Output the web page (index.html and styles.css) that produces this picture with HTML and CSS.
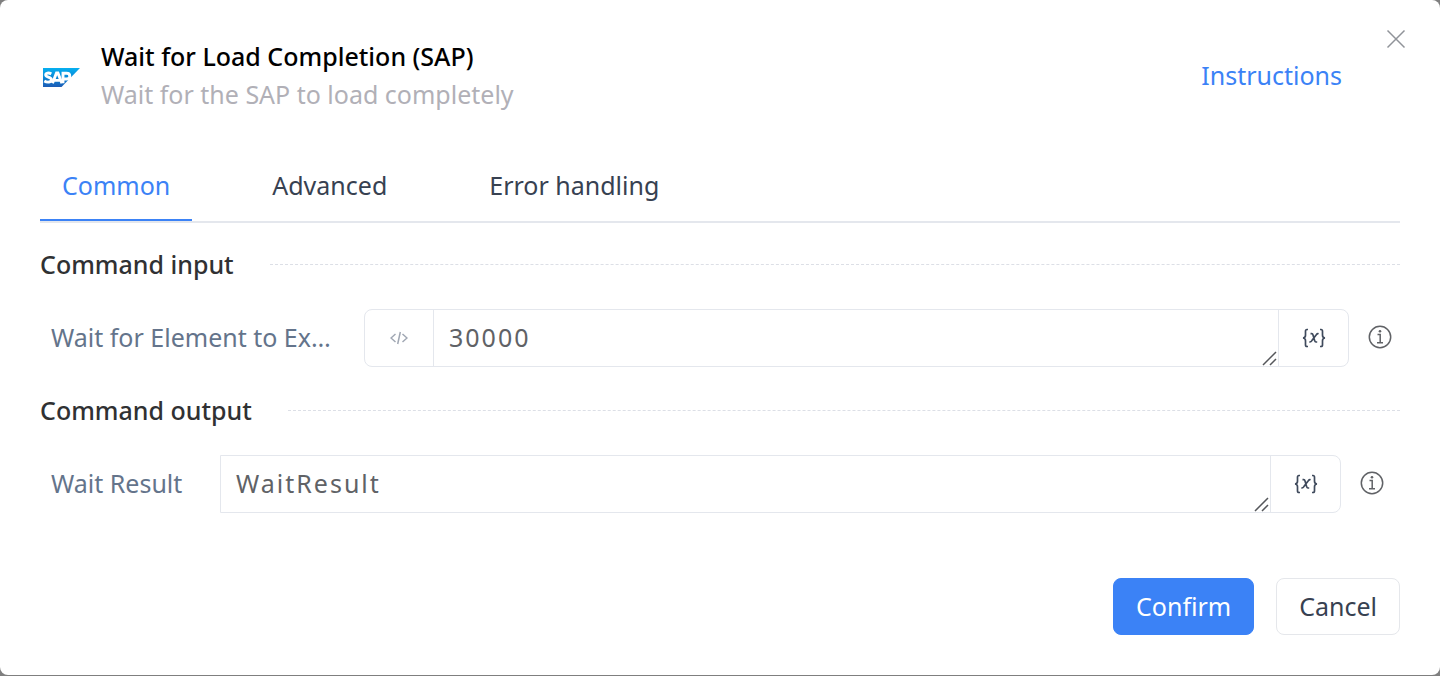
FILE: index.html
```
<!DOCTYPE html>
<html lang="en">
<head>
<meta charset="utf-8">
<title>Wait for Load Completion (SAP)</title>
<link rel="stylesheet" href="styles.css">
</head>
<body>
<main class="dialog" role="dialog" aria-labelledby="dialog-title">
  <button class="close" type="button" aria-label="Close">
    <svg width="20" height="20" viewBox="0 0 20 20" fill="none" stroke="#909399" stroke-width="1.5"><path d="M1.5 1.5l17 17M18.5 1.5l-17 17"/></svg>
  </button>

  <header class="header">
    <svg class="logo" width="38" height="20" viewBox="0 0 38 20" role="img" aria-label="SAP">
      <defs>
        <linearGradient id="sap" x1="0" y1="0" x2="0" y2="1"><stop offset="0" stop-color="#06b0f0"/><stop offset=".5" stop-color="#0a86d6"/><stop offset="1" stop-color="#1e5cb5"/></linearGradient>
      </defs>
      <path d="M0 0h37L18.500 19H0z" fill="url(#sap)"/>
      <g fill="none" stroke="#fff" stroke-width="2.900">
        <path d="M8.300 5.900C5.500 4.400 2.700 5 2.700 7c0 2.600 5.800 1.700 5.800 4.800 0 2.600-4.300 3-7.200 1.200"/>
        <path d="M9.500 15.200L13.500 5h1.400l4 10.200M11.500 12.400h5.500"/>
        <path d="M20 15.200V5.300h3.500c4.400 0 4.400 5.700 0 5.700H20"/>
      </g>
    </svg>
    <div class="heading">
      <h1 class="title" id="dialog-title">Wait for Load Completion (SAP)</h1>
      <p class="subtitle">Wait for the SAP to load completely</p>
    </div>
    <a class="instructions" href="#instructions">Instructions</a>
  </header>

  <nav class="tabs" role="tablist">
    <button class="tab tab-active" type="button" role="tab" aria-selected="true">Common</button>
    <button class="tab" type="button" role="tab" aria-selected="false">Advanced</button>
    <button class="tab" type="button" role="tab" aria-selected="false">Error handling</button>
  </nav>

  <section class="section">
    <h2 class="section-title">Command input</h2>
    <div class="row row-input">
      <label class="label" for="wait-time">Wait for Element to Ex…</label>
      <div class="field">
        <button class="addon addon-code" type="button" aria-label="Code mode">
          <svg width="18" height="14" viewBox="0 0 18 14" fill="none" stroke="#a0a7b3" stroke-width="1.500"><path d="M5.500 3L1 7l4.500 4M12.500 3L17 7l-4.500 4M10.300 1L7.700 13"/></svg>
        </button>
        <div class="editor">
          <textarea class="text" id="wait-time" rows="1">30000</textarea>
          <svg class="grip" width="15" height="15" viewBox="0 0 15 15" stroke="#55575b" stroke-width="1.500"><path d="M1 14L14 1M8 14l6-6"/></svg>
        </div>
        <button class="addon addon-var" type="button" aria-label="Insert variable">
          <svg width="24" height="20" viewBox="0 0 24 20" fill="none" stroke="#3f4a5c" stroke-width="1.700"><path d="M6 1.500H5Q3.500 1.500 3.500 3.300v4Q3.500 9.800 1 10q2.500.2 2.500 2.700v4q0 1.800 1.500 1.800h1M18 1.500h1q1.500 0 1.500 1.800v4q0 2.500 2.500 2.700-2.500.2-2.500 2.700v4q0 1.800-1.500 1.800h-1M8.500 5.700h1.200q1 0 1.400 1.500l1.500 5.300q.4 1.500 1.400 1.500h1.200M16.600 5.800q-1.300-.4-2.300 1l-4.400 5.800q-1 1.500-2.500 1.200"/></svg>
        </button>
      </div>
      <button class="info" type="button" aria-label="About this field">
        <svg width="24" height="24" viewBox="0 0 24 24" fill="none" stroke="#606266" stroke-width="1.500"><circle cx="12" cy="12" r="10.700"/><path d="M9.500 9.500h2.700v8M9 17.700h6"/><circle cx="12" cy="6.200" r="1.300" fill="#606266" stroke="none"/></svg>
      </button>
    </div>
  </section>

  <section class="section">
    <h2 class="section-title">Command output</h2>
    <div class="row row-output">
      <label class="label" for="wait-result">Wait Result</label>
      <div class="field field-plain">
        <div class="editor">
          <textarea class="text" id="wait-result" rows="1">WaitResult</textarea>
          <svg class="grip" width="15" height="15" viewBox="0 0 15 15" stroke="#55575b" stroke-width="1.500"><path d="M1 14L14 1M8 14l6-6"/></svg>
        </div>
        <button class="addon addon-var" type="button" aria-label="Insert variable">
          <svg width="24" height="20" viewBox="0 0 24 20" fill="none" stroke="#3f4a5c" stroke-width="1.700"><path d="M6 1.500H5Q3.500 1.500 3.500 3.300v4Q3.500 9.800 1 10q2.500.2 2.500 2.700v4q0 1.800 1.500 1.800h1M18 1.500h1q1.500 0 1.500 1.800v4q0 2.500 2.500 2.700-2.500.2-2.500 2.700v4q0 1.800-1.500 1.800h-1M8.500 5.700h1.200q1 0 1.400 1.500l1.500 5.300q.4 1.500 1.400 1.500h1.200M16.600 5.800q-1.300-.4-2.300 1l-4.400 5.800q-1 1.500-2.500 1.200"/></svg>
        </button>
      </div>
      <button class="info" type="button" aria-label="About this field">
        <svg width="24" height="24" viewBox="0 0 24 24" fill="none" stroke="#606266" stroke-width="1.500"><circle cx="12" cy="12" r="10.700"/><path d="M9.500 9.500h2.700v8M9 17.700h6"/><circle cx="12" cy="6.200" r="1.300" fill="#606266" stroke="none"/></svg>
      </button>
    </div>
  </section>

  <footer class="footer">
    <button class="btn btn-primary" type="button">Confirm</button>
    <button class="btn" type="button">Cancel</button>
  </footer>
</main>
</body>
</html>
```
FILE: styles.css
```
* {
  box-sizing: border-box;
}

body {
  margin: 0;
  background: #7f7f7f;
  font-family: "Noto Sans", sans-serif;
  font-size: 25px;
  line-height: 38px;
  color: #374151;
}

button,
textarea {
  margin: 0;
  padding: 0;
  border: 0;
  background: none;
  font: inherit;
  color: inherit;
}

svg {
  display: block;
}

.dialog {
  position: relative;
  margin-bottom: 1px;
  padding: 37px 40px 40px;
  border-radius: 8px;
  background: #fff;
}

.close {
  position: absolute;
  top: 29px;
  right: 34px;
}

.header {
  display: flex;
  align-items: center;
  padding: 0 58px 0 3px;
}

.logo {
  flex: none;
  margin-top: 6px;
}

.heading {
  flex: 1;
  margin-left: 20px;
}

.title,
.subtitle,
.section-title {
  margin: 0;
  font-size: 25px;
}

.title {
  font-weight: 500;
  color: #000;
}

.subtitle {
  color: #b1b0b7;
}

.instructions {
  color: #3b82f6;
  text-decoration: none;
}

.tabs {
  display: flex;
  gap: 58px;
  margin-top: 39px;
  border-bottom: 2px solid #e4e7ed;
}

.tab {
  padding: 14px 22px 16px;
  height: 69px;
  border-bottom: 2px solid transparent;
}

.tab-active {
  border-bottom-color: #3b82f6;
  color: #3b82f6;
}

.section {
  padding: 22px 0 2px;
}

.section-title {
  display: flex;
  align-items: center;
  gap: 36px;
  font-weight: 500;
  color: #303133;
}

.section-title::after {
  content: "";
  flex: 1;
  border-top: 1px dashed #dcdfe6;
}

.row {
  display: flex;
  align-items: center;
  margin-top: 26px;
  padding-left: 11px;
}

.row-input {
  padding-right: 8px;
}

.row-output {
  padding-right: 16px;
}

.label {
  flex: none;
  padding-bottom: 2px;
  color: #64748b;
}

.row-input .label {
  width: 288px;
  margin-right: 25px;
}

.row-output .label {
  width: 132px;
  margin-right: 37px;
}

.field {
  flex: 1;
  display: flex;
  height: 58px;
  border: 1px solid #e4e7ed;
  border-radius: 8px;
}

.field-plain {
  border-radius: 0 8px 8px 0;
}

.editor {
  position: relative;
  flex: 1;
}

.text {
  display: block;
  width: 100%;
  height: 56px;
  padding: 8px 15px;
  resize: none;
  overflow: hidden;
  outline: 0;
  letter-spacing: 2px;
  color: #606266;
}

.grip {
  position: absolute;
  right: 1px;
  bottom: 0;
}

.addon {
  display: grid;
  place-items: center;
  width: 70px;
}

.addon-code {
  width: 69px;
  border-right: 1px solid #e4e7ed;
}

.addon-var {
  border-left: 1px solid #e4e7ed;
}

.info {
  margin-left: 19px;
  padding-bottom: 2px;
}

.footer {
  display: flex;
  justify-content: flex-end;
  gap: 22px;
  margin-top: 63px;
}

.btn {
  height: 57px;
  padding: 0 22px 2px;
  border: 1px solid #e5e7eb;
  border-radius: 8px;
}

.btn-primary {
  border-color: #3b82f6;
  background: #3b82f6;
  color: #fff;
}
```
